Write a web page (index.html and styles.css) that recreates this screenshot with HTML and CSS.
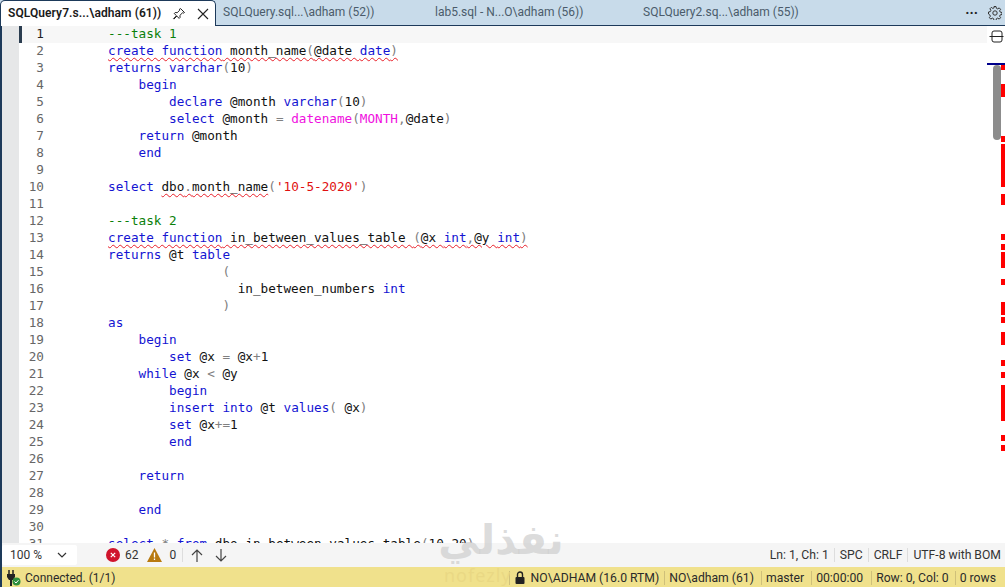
FILE: index.html
```html
<!DOCTYPE html>
<html lang="en">
<head>
  <meta charset="UTF-8">
  <title>SQLQuery7.sql</title>
  <link rel="stylesheet" href="styles.css">
</head>
<body>

<!-- Tabs -->
<div class="tabstrip">
  <div class="tab active">
    <span class="tab-name">SQLQuery7.s...\adham (61))</span>
    <svg class="pin" width="14" height="14" viewBox="0 0 14 14"><path d="M8.500 1.500l4 4-1 .6-1-.3-2.600 2.600.2 2-1 1-2.200-2.300-3 3-.4-.4 3-3-2.300-2.200 1-1 2 .2 2.600-2.600-.3-1z" fill="none" stroke="#222" stroke-width="1"/></svg>
    <svg class="close" width="12" height="12" viewBox="0 0 12 12"><path d="M1 1l10 10M11 1L1 11" stroke="#222" stroke-width="1.100"/></svg>
  </div>
  <div class="tab t2">SQLQuery.sql...\adham (52))</div>
  <div class="tab t3">lab5.sql - N...O\adham (56))</div>
  <div class="tab t4">SQLQuery2.sq...\adham (55))</div>
  <div class="tab-tools">
    <span class="dots">···</span>
    <svg width="14" height="14" viewBox="0 0 14 14" fill="none" stroke="#333"><circle cx="7" cy="7" r="2.200"/><path d="M6 .5h2l.4 1.800 1.300.6 1.500-1 1.400 1.400-1 1.500.6 1.300 1.800.4v2l-1.800.4-.6 1.300 1 1.500-1.400 1.400-1.500-1-1.300.6-.4 1.800H6l-.4-1.800-1.300-.6-1.500 1-1.400-1.400 1-1.500-.6-1.300L.5 8V6l1.800-.4.6-1.300-1-1.500 1.400-1.400 1.500 1 1.300-.6z"/></svg>
  </div>
</div>

<!-- Editor -->
<div class="editor">
  <div class="margin"></div>
  <div class="lines">
    <div class="line current"><span class="num">1</span><span class="code"><span class="c">---task 1</span></span></div>
    <div class="line"><span class="num">2</span><span class="code"><span class="err"><span class="k">create function</span> month_name<span class="p">(</span>@date <span class="k">date</span><span class="p">)</span></span></span></div>
    <div class="line"><span class="num">3</span><span class="code"><span class="k">returns varchar</span><span class="p">(</span>10<span class="p">)</span></span></div>
    <div class="line"><span class="num">4</span><span class="code">    <span class="k">begin</span></span></div>
    <div class="line"><span class="num">5</span><span class="code">        <span class="k">declare</span> @month <span class="k">varchar</span><span class="p">(</span>10<span class="p">)</span></span></div>
    <div class="line"><span class="num">6</span><span class="code">        <span class="k">select</span> @month <span class="p">=</span> <span class="f">datename</span><span class="p">(</span><span class="f">MONTH</span><span class="p">,</span>@date<span class="p">)</span></span></div>
    <div class="line"><span class="num">7</span><span class="code">    <span class="k">return</span> @month</span></div>
    <div class="line"><span class="num">8</span><span class="code">    <span class="k">end</span></span></div>
    <div class="line"><span class="num">9</span><span class="code"></span></div>
    <div class="line"><span class="num">10</span><span class="code"><span class="k">select</span> <span class="err">dbo<span class="p">.</span>month_name</span><span class="p">(</span><span class="s">'10-5-2020'</span><span class="p">)</span></span></div>
    <div class="line"><span class="num">11</span><span class="code"></span></div>
    <div class="line"><span class="num">12</span><span class="code"><span class="c">---task 2</span></span></div>
    <div class="line"><span class="num">13</span><span class="code"><span class="err"><span class="k">create function</span> in_between_values_table <span class="p">(</span>@x <span class="k">int</span><span class="p">,</span>@y <span class="k">int</span><span class="p">)</span></span></span></div>
    <div class="line"><span class="num">14</span><span class="code"><span class="k">returns</span> @t <span class="k">table</span></span></div>
    <div class="line"><span class="num">15</span><span class="code">               <span class="p">(</span></span></div>
    <div class="line"><span class="num">16</span><span class="code">                 in_between_numbers <span class="k">int</span></span></div>
    <div class="line"><span class="num">17</span><span class="code">               <span class="p">)</span></span></div>
    <div class="line"><span class="num">18</span><span class="code"><span class="k">as</span></span></div>
    <div class="line"><span class="num">19</span><span class="code">    <span class="k">begin</span></span></div>
    <div class="line"><span class="num">20</span><span class="code">        <span class="k">set</span> @x <span class="p">=</span> @x<span class="p">+</span>1</span></div>
    <div class="line"><span class="num">21</span><span class="code">    <span class="k">while</span> @x <span class="p">&lt;</span> @y</span></div>
    <div class="line"><span class="num">22</span><span class="code">        <span class="k">begin</span></span></div>
    <div class="line"><span class="num">23</span><span class="code">        <span class="k">insert into</span> @t <span class="k">values</span><span class="p">(</span> @x<span class="p">)</span></span></div>
    <div class="line"><span class="num">24</span><span class="code">        <span class="k">set</span> @x<span class="p">+=</span>1</span></div>
    <div class="line"><span class="num">25</span><span class="code">        <span class="k">end</span></span></div>
    <div class="line"><span class="num">26</span><span class="code"></span></div>
    <div class="line"><span class="num">27</span><span class="code">    <span class="k">return</span></span></div>
    <div class="line"><span class="num">28</span><span class="code"></span></div>
    <div class="line"><span class="num">29</span><span class="code">    <span class="k">end</span></span></div>
    <div class="line"><span class="num">30</span><span class="code"></span></div>
    <div class="line"><span class="num">31</span><span class="code"><span class="k">select</span> <span class="p">*</span> <span class="k">from</span> dbo<span class="p">.</span>in_between_values_table<span class="p">(</span>10<span class="p">,</span>20<span class="p">)</span></span></div>
  </div>
  <!-- scrollbar with the error marks -->
  <svg class="overview" width="18" height="517" viewBox="987 26 18 517">
    <rect x="987" y="26" width="18" height="517" fill="#fff"/>
    <path d="M992.500 36V33a2 2 0 0 1 2-2h6a2 2 0 0 1 2 2v3M990 36.500h14M992.500 37v3a2 2 0 0 0 2 2h6a2 2 0 0 0 2-2v-3" transform="translate(-.500)" fill="none" stroke="#222"/>
    <g fill="#f00">
      <rect x="1001" y="65" width="4" height="5"/>
      <rect x="1001" y="84" width="4" height="13"/>
      <rect x="1001" y="136" width="4" height="6"/>
      <rect x="1001" y="144" width="4" height="43"/>
      <rect x="1001" y="194" width="4" height="11"/>
      <rect x="1001" y="234" width="4" height="6"/>
      <rect x="1001" y="244" width="4" height="6"/>
      <rect x="1001" y="252" width="4" height="16"/>
      <rect x="1001" y="279" width="4" height="6"/>
      <rect x="1001" y="302" width="4" height="13"/>
      <rect x="1001" y="317" width="4" height="6"/>
      <rect x="1001" y="332" width="4" height="13"/>
      <rect x="1001" y="360" width="4" height="6"/>
      <rect x="1001" y="372" width="4" height="6"/>
      <rect x="1001" y="385" width="4" height="36"/>
      <rect x="1001" y="435" width="4" height="6"/>
      <rect x="1001" y="445" width="4" height="6"/>
    </g>
    <rect x="993" y="65" width="8" height="75" rx="4" fill="#8c8c8c"/>
    <rect x="987" y="63" width="18" height="2" fill="#00008b"/>
  </svg>
</div>

<!-- Zoom / errors bar -->
<div class="infobar">
  <div class="zoom-box">
    <span>100 %</span>
    <svg width="10" height="6" viewBox="0 0 10 6"><path d="M1 1l4 4 4-4" fill="none" stroke="#333" stroke-width="1.200"/></svg>
  </div>
  <div class="issues">
    <svg width="14" height="14" viewBox="0 0 14 14"><circle cx="7" cy="7" r="7" fill="#d0142c"/><path d="M4.800 4.800l4.400 4.400M9.200 4.800l-4.400 4.400" stroke="#fff" stroke-width="1.200"/></svg>
    <span class="count">62</span>
    <svg class="warn" width="15" height="14" viewBox="0 0 15 14"><path d="M7.500 0L15 14H0z" fill="#b87a10"/><path d="M7.500 4.500v5M7.500 10.500v1.500" stroke="#fff" stroke-width="1.300"/></svg>
    <span class="count zero">0</span>
  </div>
  <div class="arrows">
    <svg width="12" height="13" viewBox="0 0 12 13" fill="none" stroke="#444" stroke-width="1.200"><path d="M6 13V1M1 6l5-5 5 5"/></svg>
    <svg width="12" height="13" viewBox="0 0 12 13" fill="none" stroke="#444" stroke-width="1.200"><path d="M6 0v12M1 7l5 5 5-5"/></svg>
  </div>
  <div class="caret-info">
    <span>Ln: 1, Ch: 1</span>
    <span>SPC</span>
    <span>CRLF</span>
    <span>UTF-8 with BOM</span>
  </div>
</div>

<!-- Connection status bar -->
<div class="statusbar">
  <svg class="plug" width="15" height="16" viewBox="0 0 15 16">
    <path d="M3 0v4M7 0v4" stroke="#222" stroke-width="1.500"/>
    <path d="M1 4h8v3L7 10H3L1 7z" fill="#222"/>
    <path d="M5 10v6" stroke="#222" stroke-width="2"/>
    <circle cx="10.500" cy="11.500" r="4" fill="#2f8f3e"/>
    <path d="M8.500 11.500l1.500 1.500 2.500-2.800" fill="none" stroke="#fff"/>
  </svg>
  <span class="conn">Connected. (1/1)</span>
  <div class="conn-info">
    <span class="server"><svg width="10" height="13" viewBox="0 0 10 13"><path d="M2.500 6V3.500a2.500 2.500 0 0 1 5 0V6" fill="none" stroke="#222" stroke-width="1.400"/><rect x="0.500" y="6" width="9" height="7" rx="1" fill="#222"/></svg>NO\ADHAM (16.0 RTM)</span>
    <span class="wide">NO\adham (61)</span>
    <span class="wide">master</span>
    <span class="time">00:00:00</span>
    <span class="pos">Row: 0, Col: 0</span>
    <span>0 rows</span>
  </div>
</div>

<!-- watermark lies over the code and both bars -->
<div class="watermark">
  <div class="wm-ar">نفذلي</div>
  <div class="wm-en">nofezly</div>
</div>

</body>
</html>
```

FILE: styles.css
```css
html, body {
  height: 100%;
}
body {
  margin: 0;
  display: flex;
  flex-direction: column;
  height: 100vh;
  overflow: hidden;
  font-family: Roboto, sans-serif;
  font-size: 12px;
  color: #222;
  background: #fff;
}

/* tabs */
.tabstrip {
  display: flex;
  flex: 0 0 26px;
  box-sizing: border-box;
  height: 26px;
  background: #c8dbea;
  border-bottom: 1px solid #1d3a5a;
}
.tab {
  box-sizing: border-box;
  height: 25px;
  line-height: 25px;
  color: #4b5b6b;
  white-space: nowrap;
}
.tab.active {
  display: flex;
  align-items: center;
  width: 216px;
  height: 26px;
  padding-left: 7px;
  background: #fff;
  border: 1px solid #1d3a5a;
  border-bottom: none;
  border-radius: 5px 5px 0 0;
  color: #1a1a1a;
  font-weight: 600;
}
.tab-name {
  width: 164px;
  letter-spacing: 0.08px;
}
.pin {
  margin-right: 11px;
}
.t2 {
  width: 219px;
  padding-left: 7px;
}
.t3 {
  width: 208px;
}
.t4 {
  width: 300px;
}
.tab-tools {
  display: flex;
  align-items: center;
  gap: 10px;
  margin-left: auto;
  padding-right: 3px;
}
.dots {
  font-weight: 700;
  font-size: 14px;
}

/* editor */
.editor {
  display: flex;
  flex: 1;
  min-height: 0;
  overflow: hidden;
  border-left: 2px solid #1d3a5a;
}
.margin {
  flex: 0 0 17px;
  background: #e6e7e8;
}
.lines {
  flex: 1;
  min-width: 0;
  overflow: hidden;
  font-family: "DejaVu Sans Mono", monospace;
  font-size: 12.68px;
}
.line {
  display: flex;
  height: 17px;
  line-height: 16px;
  border-left: 3px solid transparent;
}
.line.current {
  border-left-color: #2b3d50;
  background: #f7f7f7;
}
.num {
  flex: 0 0 22px;
  text-align: right;
  color: #666;
}
.line.current .num {
  color: #222;
}
.code {
  padding-left: 64px;
  white-space: pre;
  color: #111;
}
.k { color: #1414d2; }
.c { color: #0a800a; }
.f { color: #f010e0; }
.s { color: #e01010; }
.p { color: #808080; }
.err {
  text-decoration: underline wavy #e8202a 1px;
  text-underline-offset: 2px;
}
.overview {
  flex: 0 0 18px;
}

/* watermark */
.watermark {
  position: absolute;
  left: 436px;
  top: 516px;
  width: 130px;
  text-align: center;
  pointer-events: none;
}
.wm-ar {
  font-family: "DejaVu Sans", sans-serif;
  font-size: 41px;
  line-height: 48px;
  font-weight: 700;
  color: rgba(205, 205, 205, 0.7);
}
.wm-en {
  font-family: "Noto Sans", sans-serif;
  font-size: 18px;
  line-height: 22px;
  color: rgba(232, 214, 130, 0.8);
  letter-spacing: 1px;
  text-align: left;
  padding-left: 8px;
}

/* zoom bar */
.infobar {
  display: flex;
  align-items: center;
  flex: 0 0 24px;
  background: #f5f5f5;
  border-left: 2px solid #1d3a5a;
  color: #333;
}
.zoom-box {
  display: flex;
  align-items: center;
  justify-content: space-between;
  box-sizing: border-box;
  width: 75px;
  height: 20px;
  padding: 0 10px 0 8px;
  background: #fff;
  border-radius: 2px;
}
.issues {
  display: flex;
  align-items: center;
  margin-left: 29px;
  padding-right: 6px;
  border-right: 1px solid #ddd;
}
.count {
  margin-left: 5px;
}
.count.zero {
  margin-left: 8px;
}
.warn {
  margin-left: 8px;
}
.arrows {
  display: flex;
  gap: 12px;
  margin-left: 8px;
}
.caret-info {
  display: flex;
  margin-left: auto;
  font-size: 12.2px;
}
.caret-info span {
  padding: 0 5px;
  border-left: 1px solid #ddd;
}
.caret-info span:first-child {
  border-left: none;
}
.caret-info span:last-child {
  padding-right: 4px;
}

/* status bar */
.statusbar {
  display: flex;
  align-items: center;
  flex: 0 0 20px;
  padding: 1px 0 0 4px;
  background: #f0e18c;
  border-left: 2px solid #1d3a5a;
  box-sizing: border-box;
  color: #2a2a2a;
}
.conn {
  margin-left: 4px;
}
.conn-info {
  display: flex;
  margin-left: auto;
  padding-right: 5px;
  font-size: 12.2px;
}
.conn-info span {
  padding: 0 4px;
  border-left: 1px solid #cfc07a;
}
.conn-info .wide {
  padding-right: 7px;
}
.conn-info .time {
  padding-right: 8px;
}
.conn-info .pos {
  padding-right: 6px;
}
.conn-info .server {
  padding: 0 5px;
}
.server svg {
  vertical-align: -2px;
  margin-right: 6px;
}
```
